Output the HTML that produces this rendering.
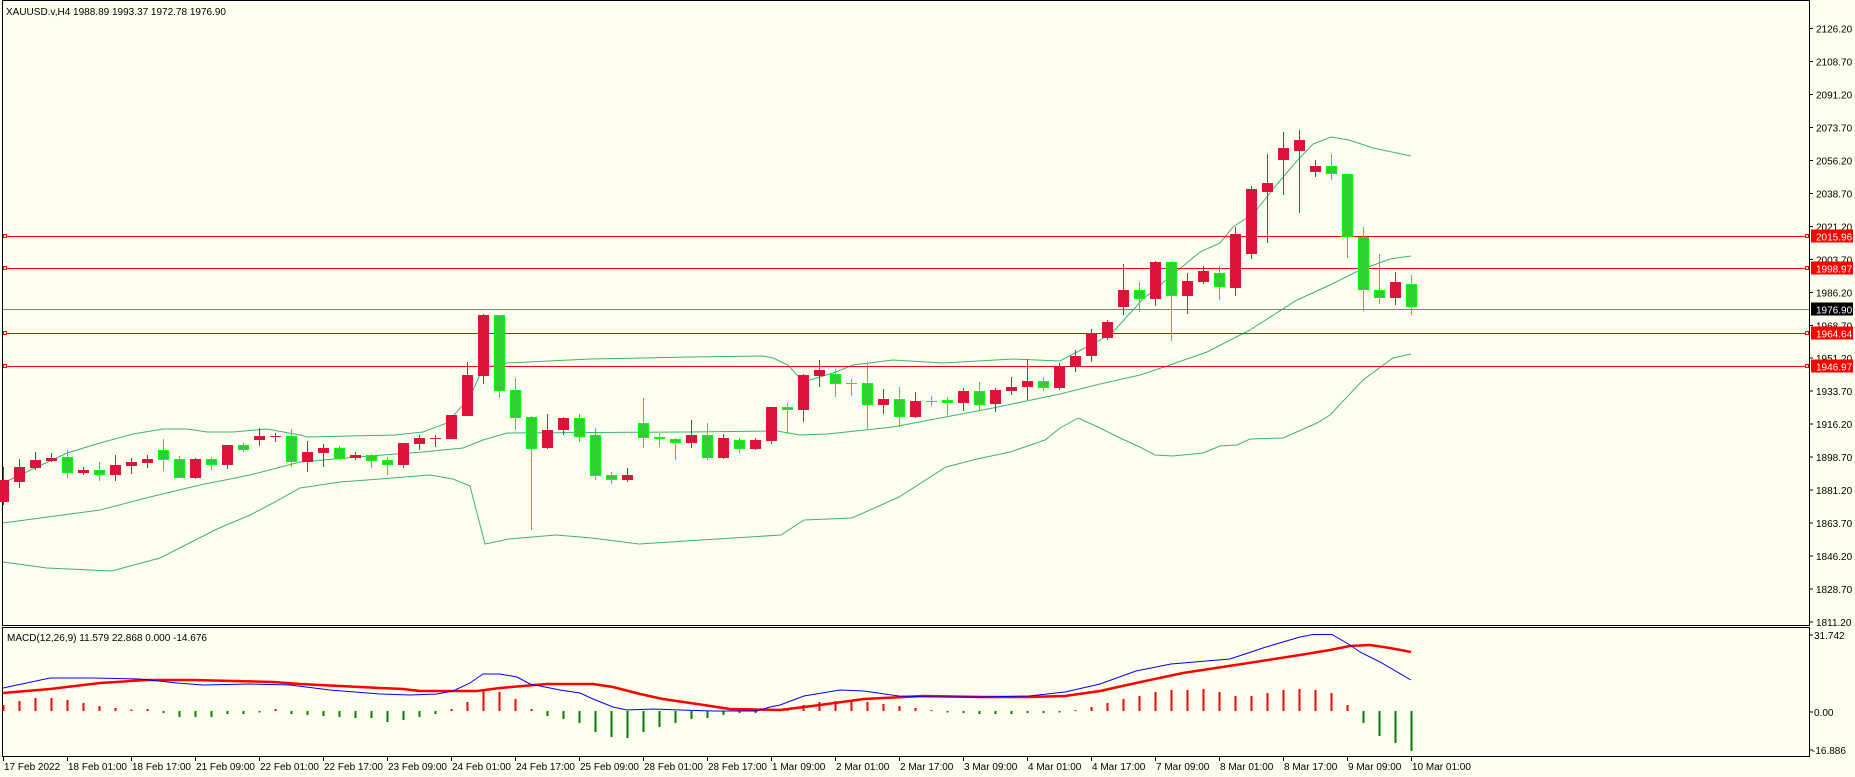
<!DOCTYPE html>
<html><head><meta charset="utf-8"><style>
html,body{margin:0;padding:0;background:#fffff0;width:1855px;height:777px;overflow:hidden}
svg{display:block}
text{font-family:"Liberation Sans",sans-serif;font-size:10px;fill:#000}
</style></head><body>
<svg width="1855" height="777" viewBox="0 0 1855 777" xmlns="http://www.w3.org/2000/svg">
<rect width="1855" height="777" fill="#fffff0"/>
<g fill="none" stroke="#000" stroke-width="1" shape-rendering="crispEdges">
<path d="M2.5 0.5H1809.5V625.5H2.5Z"/>
<path d="M2.5 627.5H1809.5V756.5H2.5Z"/>
</g>
<text x="6" y="15">XAUUSD.v,H4  1988.89 1993.37 1972.78 1976.90</text>
<g stroke="#000" shape-rendering="crispEdges">
<path d="M1809 28.7h4M1809 61.7h4M1809 94.6h4M1809 127.6h4M1809 160.5h4M1809 193.5h4M1809 226.4h4M1809 259.4h4M1809 292.3h4M1809 325.3h4M1809 358.2h4M1809 391.2h4M1809 424.1h4M1809 457.1h4M1809 490h4M1809 523h4M1809 555.9h4M1809 588.9h4M1809 621.8h4M1809 635h4M1809 712h4M1809 750h4"/>
</g>
<g>
<text x="1816" y="32.7">2126.20</text><text x="1816" y="65.7">2108.70</text><text x="1816" y="98.6">2091.20</text><text x="1816" y="131.6">2073.70</text><text x="1816" y="164.5">2056.20</text><text x="1816" y="197.5">2038.70</text><text x="1816" y="230.4">2021.20</text><text x="1816" y="263.4">2003.70</text><text x="1816" y="296.3">1986.20</text><text x="1816" y="329.3">1968.70</text><text x="1816" y="362.2">1951.20</text><text x="1816" y="395.2">1933.70</text><text x="1816" y="428.1">1916.20</text><text x="1816" y="461.1">1898.70</text><text x="1816" y="494">1881.20</text><text x="1816" y="527">1863.70</text><text x="1816" y="559.9">1846.20</text><text x="1816" y="592.9">1828.70</text><text x="1816" y="625.8">1811.20</text>
<text x="1814" y="639">31.742</text><text x="1814" y="716">0.00</text><text x="1812" y="754">-16.886</text>
</g>
<g fill="none" stroke="#3cb371" stroke-width="1">
<polyline points="3,483 67,453 100,443 133,434 163,429 187,429 207,432 233,432 267,429 300,435 307,437 395,435 423,432 447,423 470,397 483,368 507,363 590,359 690,357 763,356 773,358 788,365 803,382 833,373 853,365 893,360 943,363 1013,359 1060,361 1100,340 1113,332 1143,299 1200,252 1220,243 1233,227 1254,213 1278,183 1296,162 1313,144 1331,137 1349,140 1373,148 1411,156"/>
<polyline points="3,523 100,510 150,497 200,485 250,475 300,462 357,457 423,452 463,448 483,440 507,433 690,432 777,431 800,435 827,434 893,427 993,408 1060,394 1100,384 1140,375 1167,366 1207,352 1250,330 1297,300 1330,285 1360,270 1390,259 1411,256"/>
<polyline points="3,562 47,568 112,571 130,566 160,558 217,529 250,515 273,503 300,488 340,482 380,479 430,475 453,479 470,486 485,544 509,539 556,535 592,538 639,544 686,541 733,538 781,535 804,520 852,518 899,497 946,467 977,459 1010,452 1045,440 1060,428 1078,418 1100,428 1120,438 1140,447 1155,455 1173,456 1203,453 1220,446 1237,445 1250,439 1283,438 1317,423 1330,415 1363,380 1393,358 1411,354"/>
</g>
<g shape-rendering="crispEdges">
<path d="M3 236.5H1809M3 268.5H1809M3 333.5H1809M3 366.5H1809" stroke="#ff0000" stroke-width="1.4"/>
<path d="M3 309.5H1809" stroke="#808080" stroke-width="1.4"/>
<g fill="#fffff0" stroke="#ff0000">
<rect x="1805.5" y="234.5" width="3" height="3"/><rect x="1805.5" y="266.5" width="3" height="3"/><rect x="1805.5" y="331.5" width="3" height="3"/><rect x="1805.5" y="364.5" width="3" height="3"/>
<rect x="3.5" y="234.5" width="3" height="3"/><rect x="3.5" y="266.5" width="3" height="3"/><rect x="3.5" y="331.5" width="3" height="3"/><rect x="3.5" y="364.5" width="3" height="3"/>
</g>
<rect x="1811" y="229.5" width="42" height="13" fill="#ff0000"/>
<rect x="1811" y="261.5" width="42" height="13" fill="#ff0000"/>
<rect x="1811" y="302.5" width="42" height="13" fill="#000"/>
<rect x="1811" y="326.5" width="42" height="13" fill="#ff0000"/>
<rect x="1811" y="359.5" width="42" height="13" fill="#ff0000"/>
</g>
<g>
<text x="1816" y="240.5" style="fill:#fff">2015.96</text>
<text x="1816" y="272.5" style="fill:#fff">1998.97</text>
<text x="1816" y="313.5" style="fill:#fff">1976.90</text>
<text x="1816" y="337.5" style="fill:#fff">1964.64</text>
<text x="1816" y="370.5" style="fill:#fff">1946.97</text>
</g>
<g shape-rendering="crispEdges">
<path stroke="#dc143c" stroke-width="1" fill="none" d="M3.5 467V505M19.5 459V488M35.5 452V470M51.5 453V462M83.5 467V475M115.5 455V481M131.5 458V474M147.5 455V468M195.5 458V479M227.5 445V469M259.5 428V446M275.5 433V442M307.5 441V472M323.5 444V467M355.5 452V460M403.5 443V468M419.5 435V450M435.5 435V447M451.5 415V439M467.5 362V416M483.5 314V384M547.5 414V449M563.5 417V435M627.5 468V482M691.5 420V448M723.5 434V459M755.5 438V450M771.5 407V444M803.5 374V422M819.5 360V387M883.5 389V414M915.5 392V418M963.5 388V411M995.5 388V412M1011.5 377V395M1027.5 359V400M1059.5 363V390M1075.5 350V372M1091.5 329V362M1107.5 320V340M1123.5 264V315M1155.5 261V306M1187.5 273V314M1203.5 266V284M1235.5 227V296M1251.5 186V259M1267.5 154V243M1283.5 132V195M1299.5 130V213M1315.5 160V177M1395.5 272V305"/>
<g fill="#dc143c">
<rect x="-2" y="480" width="11" height="22"/><rect x="14" y="467" width="11" height="15"/><rect x="30" y="460" width="11" height="8"/><rect x="46" y="458" width="11" height="3"/><rect x="78" y="470" width="11" height="3"/><rect x="110" y="465" width="11" height="10"/><rect x="126" y="462" width="11" height="4"/><rect x="142" y="459" width="11" height="4"/><rect x="190" y="459" width="11" height="19"/><rect x="222" y="445" width="11" height="20"/><rect x="254" y="436" width="11" height="4"/><rect x="270" y="436" width="11" height="1"/><rect x="302" y="452" width="11" height="10"/><rect x="318" y="448" width="11" height="5"/><rect x="350" y="455" width="11" height="3"/><rect x="398" y="443" width="11" height="22"/><rect x="414" y="438" width="11" height="6"/><rect x="430" y="438" width="11" height="1"/><rect x="446" y="415" width="11" height="24"/><rect x="462" y="375" width="11" height="41"/><rect x="478" y="315" width="11" height="61"/><rect x="542" y="430" width="11" height="18"/><rect x="558" y="418" width="11" height="12"/><rect x="622" y="475" width="11" height="5"/><rect x="686" y="435" width="11" height="8"/><rect x="718" y="438" width="11" height="20"/><rect x="750" y="440" width="11" height="9"/><rect x="766" y="407" width="11" height="34"/><rect x="798" y="375" width="11" height="35"/><rect x="814" y="370" width="11" height="6"/><rect x="878" y="399" width="11" height="6"/><rect x="910" y="401" width="11" height="16"/><rect x="958" y="391" width="11" height="12"/><rect x="990" y="390" width="11" height="14"/><rect x="1006" y="387" width="11" height="4"/><rect x="1022" y="381" width="11" height="6"/><rect x="1054" y="366" width="11" height="22"/><rect x="1070" y="356" width="11" height="11"/><rect x="1086" y="333" width="11" height="23"/><rect x="1102" y="322" width="11" height="16"/><rect x="1118" y="290" width="11" height="17"/><rect x="1150" y="262" width="11" height="37"/><rect x="1182" y="281" width="11" height="15"/><rect x="1198" y="271" width="11" height="11"/><rect x="1230" y="234" width="11" height="54"/><rect x="1246" y="189" width="11" height="65"/><rect x="1262" y="183" width="11" height="9"/><rect x="1278" y="148" width="11" height="12"/><rect x="1294" y="140" width="11" height="11"/><rect x="1310" y="166" width="11" height="6"/><rect x="1390" y="282" width="11" height="16"/>
</g>
<path stroke="#00ff00" stroke-width="1" fill="none" d="M67.5 450V478M99.5 462V481M163.5 439V471M179.5 456V478M211.5 457V470M243.5 443V452M291.5 429V467M339.5 446V460M371.5 454V468M387.5 457V475M499.5 315V398M515.5 378V430M531.5 416V530M579.5 414V442M595.5 428V480M611.5 472V484M643.5 398V448M659.5 433V447M675.5 438V460M707.5 423V460M739.5 438V453M787.5 403V434M835.5 369V397M851.5 379V396M867.5 363V429M899.5 387V427M931.5 396V406M947.5 397V415M979.5 382V411M1043.5 377V391M1139.5 282V312M1171.5 261V341M1219.5 266V300M1331.5 154V180M1347.5 174V258M1363.5 227V311M1379.5 254V304M1411.5 275V315M846 383.5h11M926 401.5h11"/>
<g fill="#32cd32" stroke="#00ff00" stroke-width="1">
<rect x="62.5" y="457.5" width="10" height="15"/><rect x="94.5" y="470.5" width="10" height="4"/><rect x="158.5" y="450.5" width="10" height="9"/><rect x="174.5" y="459.5" width="10" height="18"/><rect x="206.5" y="459.5" width="10" height="5"/><rect x="238.5" y="445.5" width="10" height="4"/><rect x="286.5" y="436.5" width="10" height="25"/><rect x="334.5" y="448.5" width="10" height="10"/><rect x="366.5" y="455.5" width="10" height="5"/><rect x="382.5" y="460.5" width="10" height="4"/><rect x="494.5" y="315.5" width="10" height="75"/><rect x="510.5" y="390.5" width="10" height="27"/><rect x="526.5" y="417.5" width="10" height="31"/><rect x="574.5" y="418.5" width="10" height="18"/><rect x="590.5" y="435.5" width="10" height="40"/><rect x="606.5" y="475.5" width="10" height="4"/><rect x="638.5" y="423.5" width="10" height="14"/><rect x="654.5" y="437.5" width="10" height="1"/><rect x="670.5" y="439.5" width="10" height="3"/><rect x="702.5" y="435.5" width="10" height="22"/><rect x="734.5" y="440.5" width="10" height="8"/><rect x="782.5" y="407.5" width="10" height="2"/><rect x="830.5" y="374.5" width="10" height="9"/><rect x="862.5" y="383.5" width="10" height="21"/><rect x="894.5" y="399.5" width="10" height="17"/><rect x="942.5" y="400.5" width="10" height="2"/><rect x="974.5" y="391.5" width="10" height="13"/><rect x="1038.5" y="381.5" width="10" height="6"/><rect x="1134.5" y="290.5" width="10" height="8"/><rect x="1166.5" y="262.5" width="10" height="33"/><rect x="1214.5" y="273.5" width="10" height="13"/><rect x="1326.5" y="166.5" width="10" height="7"/><rect x="1342.5" y="174.5" width="10" height="62"/><rect x="1358.5" y="237.5" width="10" height="52"/><rect x="1374.5" y="290.5" width="10" height="7"/><rect x="1406.5" y="284.5" width="10" height="22"/>
</g>
</g>
<text x="7" y="641">MACD(12,26,9) 11.579 22.868 0.000 -14.676</text>
<g shape-rendering="crispEdges" stroke-width="2">
<path stroke="#ff0000" d="M3.5 711V705M19.5 711V701M35.5 711V698M51.5 711V698M67.5 711V700M83.5 711V703M99.5 711V706M115.5 711V708M131.5 711V709.5M147.5 711V709M275.5 711V709M451.5 711V709M467.5 711V702M483.5 711V691M499.5 711V692M515.5 711V699M531.5 711V709M771.5 711V709M787.5 711V708M803.5 711V705M819.5 711V702M835.5 711V701M851.5 711V701M867.5 711V702M883.5 711V704M899.5 711V706M915.5 711V708M931.5 711V710M1075.5 711V710M1091.5 711V707M1107.5 711V703M1123.5 711V699M1139.5 711V696M1155.5 711V692M1171.5 711V690M1187.5 711V690M1203.5 711V689M1219.5 711V692M1235.5 711V696M1251.5 711V696M1267.5 711V693M1283.5 711V690M1299.5 711V689M1315.5 711V690M1331.5 711V693M1347.5 711V705"/>
<path stroke="#008000" d="M163.5 711V713M179.5 711V717M195.5 711V717M211.5 711V717M227.5 711V714M243.5 711V714M259.5 711V712.5M291.5 711V714M307.5 711V715M323.5 711V716M339.5 711V717M355.5 711V718M371.5 711V718M387.5 711V722M403.5 711V720M419.5 711V717M435.5 711V714M547.5 711V716M563.5 711V719M579.5 711V723M595.5 711V732M611.5 711V737M627.5 711V738M643.5 711V732M659.5 711V727M675.5 711V723M691.5 711V719M707.5 711V718M723.5 711V715M739.5 711V713M755.5 711V713M947.5 711V712.5M963.5 711V713M979.5 711V714M995.5 711V714M1011.5 711V714M1027.5 711V713M1043.5 711V713M1059.5 711V712.5M1363.5 711V723M1379.5 711V736M1395.5 711V743M1411.5 711V751"/>
</g>
<polyline fill="none" stroke="#ff0000" stroke-width="2.5" points="3,693 50,689 100,683 147,680 193,680 233,681 273,682 300,684 340,686 380,688 403,689 420,691 450,691 477,691 500,688 523,686 547,684 593,684 613,687 640,694 663,699 697,704 730,709 780,710 820,705 864,699 923,696 982,697 1029,697 1065,696 1100,691 1136,683 1183,673 1242,664 1300,655 1330,650 1350,646 1370,645 1390,648 1411,652"/>
<polyline fill="none" stroke="#0000ff" stroke-width="1" points="3,688 50,678 92,678 140,679 177,683 203,685 250,684 290,685 330,690 380,694 410,695 437,694 453,691 470,683 483,674 500,674 517,677 530,684 560,690 580,693 593,699 613,707 627,710 653,709 680,710 713,711 757,711 770,707 780,705 804,696 840,690 864,691 899,696 935,697 982,697 1029,696 1065,692 1100,684 1136,671 1171,664 1230,659 1266,647 1300,637 1313,634.5 1332,634.5 1350,645 1360,652 1380,662 1411,680"/>
<path stroke="#000" shape-rendering="crispEdges" d="M3.5 756v5M67.5 756v5M131.5 756v5M195.5 756v5M259.5 756v5M323.5 756v5M387.5 756v5M451.5 756v5M515.5 756v5M579.5 756v5M643.5 756v5M707.5 756v5M771.5 756v5M835.5 756v5M899.5 756v5M963.5 756v5M1027.5 756v5M1091.5 756v5M1155.5 756v5M1219.5 756v5M1283.5 756v5M1347.5 756v5M1411.5 756v5"/>
<g>
<text x="4" y="770">17 Feb 2022</text><text x="68" y="770">18 Feb 01:00</text><text x="132" y="770">18 Feb 17:00</text><text x="196" y="770">21 Feb 09:00</text><text x="260" y="770">22 Feb 01:00</text><text x="324" y="770">22 Feb 17:00</text><text x="388" y="770">23 Feb 09:00</text><text x="452" y="770">24 Feb 01:00</text><text x="516" y="770">24 Feb 17:00</text><text x="580" y="770">25 Feb 09:00</text><text x="644" y="770">28 Feb 01:00</text><text x="708" y="770">28 Feb 17:00</text><text x="772" y="770">1 Mar 09:00</text><text x="836" y="770">2 Mar 01:00</text><text x="900" y="770">2 Mar 17:00</text><text x="964" y="770">3 Mar 09:00</text><text x="1028" y="770">4 Mar 01:00</text><text x="1092" y="770">4 Mar 17:00</text><text x="1156" y="770">7 Mar 09:00</text><text x="1220" y="770">8 Mar 01:00</text><text x="1284" y="770">8 Mar 17:00</text><text x="1348" y="770">9 Mar 09:00</text><text x="1412" y="770">10 Mar 01:00</text>
</g>
</svg>
</body></html>
